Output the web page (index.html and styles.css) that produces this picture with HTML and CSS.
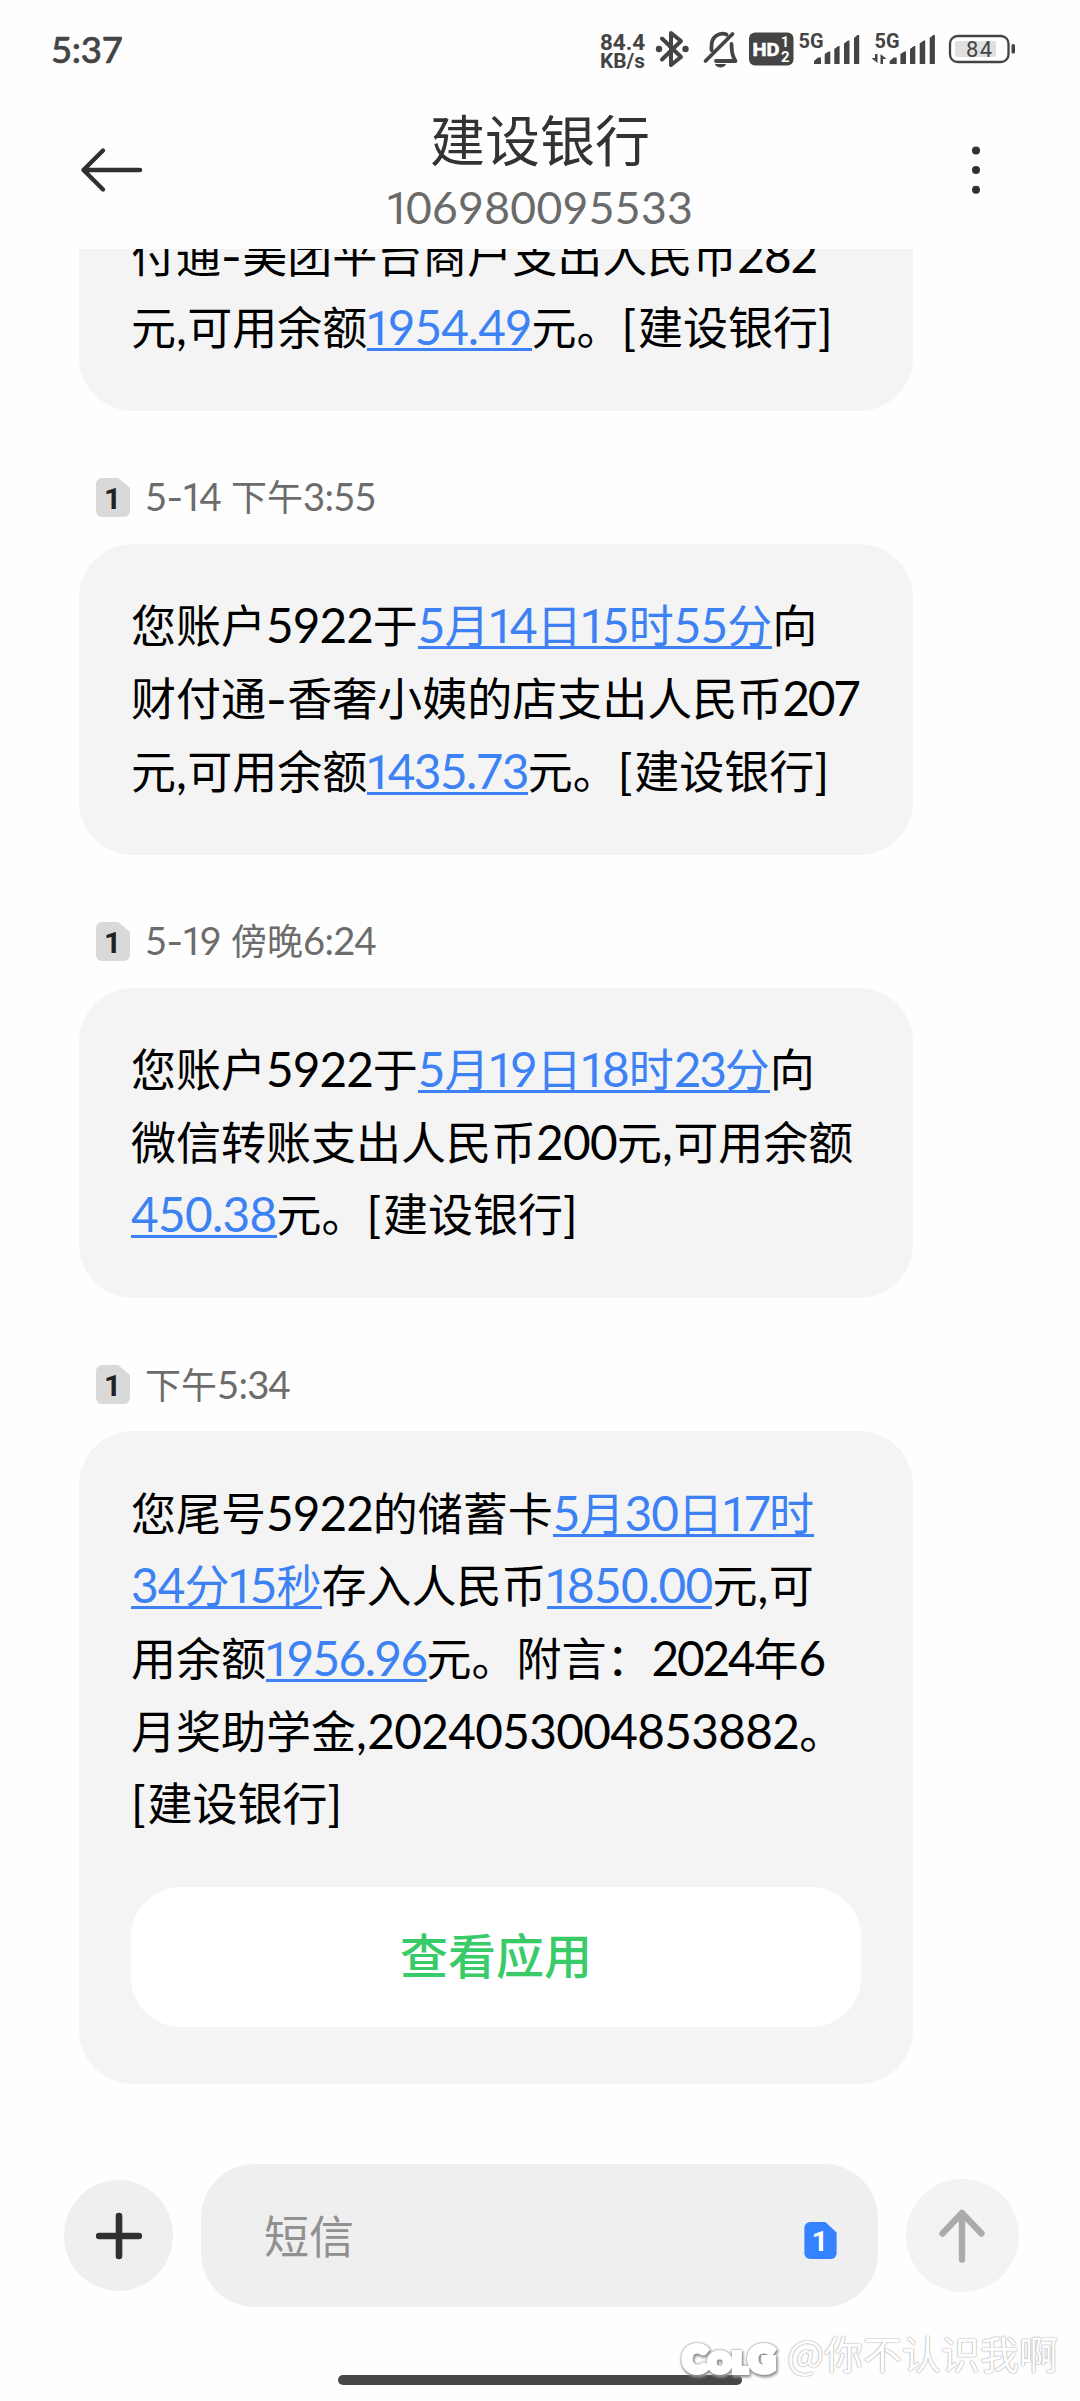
FILE: index.html
```html
<!DOCTYPE html>
<html lang="zh-CN">
<head>
<meta charset="utf-8">
<title>建设银行</title>
<link rel="stylesheet" href="styles.css">
</head>
<body>
<div class="screen">
  <header class="top">
    <div class="status">
      <span class="clock">5:37</span>
      <svg class="tray" width="424" height="44" viewBox="596 27 424 44">
        <g class="ink">
          <text class="bold" x="600" y="50" font-size="22" textLength="45" lengthAdjust="spacingAndGlyphs">84.4</text>
          <text class="bold" x="600" y="68" font-size="19.5" textLength="45" lengthAdjust="spacingAndGlyphs">KB/s</text>
          <path class="line" stroke-width="4" d="M662 38.5 681 57 671 65V33L681 41 662 59.5"/>
          <circle cx="659" cy="49" r="3.2"/><circle cx="685.5" cy="49" r="3.2"/>
          <path class="line" stroke-width="3.8" d="M705.5 61 732.5 34M711.500 50V46a11 12 0 0 1 15-11.500M731.500 44c.3 9 1 12 4 17H716"/>
          <path d="M715 64h11c-1 4.500-10 4.500-11 0z"/>
          <rect x="749" y="32.500" width="44.500" height="33" rx="6"/>
          <text class="bold white hd" x="752.500" y="56" font-size="18.500" textLength="27" lengthAdjust="spacingAndGlyphs">HD</text>
          <text class="bold white" x="781" y="47" font-size="14">1</text>
          <text class="bold white" x="781" y="62" font-size="15">2</text>
          <text class="bold" x="798.500" y="48" font-size="20" textLength="25" lengthAdjust="spacingAndGlyphs">5G</text>
          <path d="M814 64V61l4-3.500h3V64zM824.700 64V54l4-2.500h1.600V64zM834.300 64V49l4-3h1.300V64zM844 64V43.500l4-3h1.500V64zM854 64V38l3.500-3h1.700V64z"/>
          <text class="bold" x="874.500" y="48" font-size="20" textLength="25" lengthAdjust="spacingAndGlyphs">5G</text>
          <path d="M889.700 64V61l4-3.500h3V64zM900.400 64V54l4-2.500h1.600V64zM910 64V49l4-3h1.300V64zM919.700 64V43.500l4-3h1.500V64zM929.700 64V38l3.500-3h1.700V64z"/>
          <path d="M875 54h2.500v9L871.500 58H875zM880.500 54l6 5H883v5h-2.500z"/>
          <rect class="line" x="950" y="36" width="58.500" height="26" rx="7.500" stroke-width="2.300"/>
          <rect class="charge" x="955" y="41" width="41" height="16" rx="2"/>
          <text x="966" y="57" font-size="22" textLength="26">84</text>
          <rect x="1011.500" y="44" width="3.500" height="9.500" rx="1.500"/>
        </g>
      </svg>
    </div>
    <div class="title-bar">
      <svg class="back" width="68" height="50" viewBox="78 145 68 50"><path class="line dark" stroke-width="4.400" d="M103 150.500 83.500 170 103 189.500M83.500 170H140"/></svg>
      <div class="contact">
        <h1>建设银行</h1>
        <p><b>1</b>06980095533</p>
      </div>
      <svg class="more" width="20" height="50" viewBox="0 0 20 50"><circle cx="10" cy="5.500" r="4"/><circle cx="10" cy="25" r="4"/><circle cx="10" cy="44.700" r="4"/></svg>
    </div>
  </header>

  <main class="thread">
    <article class="message clipped">
      <div class="bubble">
        <p>付通<i class="dash">-</i>美团平台商户支出人民币<i>282</i></p>
        <p>元<i class="comma">,</i>可用余额<a><i><b>1</b>954.49</i></a>元。<i class="br">[</i>建设银行<i class="br">]</i></p>
      </div>
    </article>
    <article class="message">
      <div class="meta"><svg class="sim" viewBox="0 0 34 39"><path d="M6 0H22L34 10V33a6 6 0 0 1-6 6H6a6 6 0 0 1-6-6V6a6 6 0 0 1 6-6z"/><text x="16.500" y="30.500" text-anchor="middle">1</text></svg><span><i>5</i><i class="dash">-</i><i><b>1</b>4</i> 下午<i>3:55</i></span></div>
      <div class="bubble">
        <p>您账户<i>5922</i>于<a><i>5</i>月<i><b>1</b>4</i>日<i><b>1</b>5</i>时<i>55</i>分</a>向</p>
        <p>财付通<i class="dash">-</i>香奢小姨的店支出人民币<i class="tight">207</i></p>
        <p>元<i class="comma">,</i>可用余额<a><i class="snug"><b>1</b>435.73</i></a>元。<i class="br">[</i>建设银行<i class="br">]</i></p>
      </div>
    </article>
    <article class="message">
      <div class="meta"><svg class="sim" viewBox="0 0 34 39"><path d="M6 0H22L34 10V33a6 6 0 0 1-6 6H6a6 6 0 0 1-6-6V6a6 6 0 0 1 6-6z"/><text x="16.500" y="30.500" text-anchor="middle">1</text></svg><span><i>5</i><i class="dash">-</i><i><b>1</b>9</i> 傍晚<i>6:24</i></span></div>
      <div class="bubble">
        <p>您账户<i>5922</i>于<a><i>5</i>月<i><b>1</b>9</i>日<i><b>1</b>8</i>时<i class="tight">23</i>分</a>向</p>
        <p>微信转账支出人民币<i class="loose">200</i>元<i class="comma">,</i>可用余额</p>
        <p><a><i class="loose">450.38</i></a>元。<i class="br">[</i>建设银行<i class="br">]</i></p>
      </div>
    </article>
    <article class="message">
      <div class="meta"><svg class="sim" viewBox="0 0 34 39"><path d="M6 0H22L34 10V33a6 6 0 0 1-6 6H6a6 6 0 0 1-6-6V6a6 6 0 0 1 6-6z"/><text x="16.500" y="30.500" text-anchor="middle">1</text></svg><span>下午<i>5:34</i></span></div>
      <div class="bubble">
        <p>您尾号<i>5922</i>的储蓄卡<a><i>5</i>月<i>30</i>日<i class="tight"><b>1</b>7</i>时</a></p>
        <p><a><i>34</i>分<i><b>1</b>5</i>秒</a>存入人民币<a><i class="loose"><b>1</b>850.00</i></a>元<i class="comma">,</i>可</p>
        <p>用余额<a><i class="snug"><b>1</b>956.96</i></a>元。附言：<i class="tight">2024</i>年<i>6</i></p>
        <p>月奖助学金<i class="comma">,</i><i class="loose">2024053004853882</i>。</p>
        <p><i class="br">[</i>建设银行<i class="br">]</i></p>
        <div class="action">查看应用</div>
      </div>
    </article>
  </main>

  <footer class="composer">
    <div class="round add"><svg width="50" height="50" viewBox="0 0 50 50"><path class="line dark" stroke-width="6.600" d="M25 5V45M5.200 25H44.800"/></svg></div>
    <div class="field">
      <span>短信</span>
      <svg class="sim blue" viewBox="0 0 34 39"><path d="M6 0H22L34 11V33a6 6 0 0 1-6 6H6a6 6 0 0 1-6-6V6a6 6 0 0 1 6-6z"/><text x="16.500" y="31" text-anchor="middle">1</text></svg>
    </div>
    <div class="round send"><svg width="56" height="60" viewBox="0 0 56 60"><path class="line" stroke-width="6.400" d="M28 7V53.500M8.500 27.500 28 7 47.500 27.500"/></svg></div>
  </footer>
  <div class="home-bar"></div>
  <div class="watermark"><strong>C<small>OL</small>G</strong><span>@你不认识我啊</span></div>
</div>
</body>
</html>
```
FILE: styles.css
```css
* { box-sizing: border-box; margin: 0; padding: 0; }
body { background: #fefefe; font-family: "Noto Sans CJK SC", sans-serif; }
i { font-family: Lato, "Noto Sans CJK SC", sans-serif; font-style: normal; font-size: 1.06em; letter-spacing: -0.02em; line-height: 1; }
b { font-family: Roboto, sans-serif; font-weight: 400; margin-left: -0.045em; letter-spacing: -0.09em; }
.tight { letter-spacing: -0.045em; }
.snug { letter-spacing: -0.033em; }
.loose { letter-spacing: -0.014em; }
.dash { font-family: Inter, sans-serif; font-size: 1em; letter-spacing: 0.01em; }
.comma { letter-spacing: 0.01em; }
.br { letter-spacing: 0.04em; }

.screen { position: relative; width: 1080px; height: 2401px; overflow: hidden; display: flex; flex-direction: column; }
.top { height: 249px; flex: none; display: flex; flex-direction: column; position: relative; z-index: 1; background: #fefefe; }
.status { display: flex; justify-content: space-between; align-items: center; padding: 27px 60px 0 51px; height: 71px; }
.clock { font: 500 36.500px/44px Lato, sans-serif; color: #444; letter-spacing: -0.3px; -webkit-text-stroke: 0.6px #444; }
.tray { font-family: Roboto, sans-serif; }
.ink { fill: #444; }
.ink .line { stroke: #444; }
.line { fill: none; stroke-linecap: round; stroke-linejoin: round; }
.dark { stroke: #303030; }
.bold { font-weight: 700; }
.ink .white { fill: #fff; }
.ink .hd { stroke: #fff; stroke-width: 0.6px; }
.ink .charge { fill: #e0e0e0; }

.title-bar { display: grid; grid-template-columns: 1fr auto 1fr; align-items: start; padding: 0 94px; height: 178px; }
.back, .more { margin-top: 74px; }
.back { margin-left: -16px; }
.more { fill: #303030; justify-self: end; }
.contact { text-align: center; }
.contact h1 { font-size: 55px; font-weight: 400; line-height: 70px; margin-top: 31px; color: #333; }
.contact p { font: 44.500px/50px Lato, sans-serif; color: #6a6a6a; margin-top: 10px; letter-spacing: 0.3px; }

.thread { flex: none; height: 1835px; padding-left: 79px; display: flex; flex-direction: column; justify-content: flex-end; }
.message { width: 834px; }
.meta { height: 133px; display: flex; align-items: center; gap: 15px; padding: 40px 0 0 17px; font-size: 36px; line-height: 40px; color: #6c6c6c; white-space: pre; }
.meta span { word-spacing: 2px; padding-bottom: 2px; }
.sim { width: 34px; height: 39px; flex: none; fill: #d9d9d9; }
.sim text { font: 700 30px Roboto, sans-serif; fill: #222; }
.sim.blue { width: 33px; height: 37px; fill: #3482ff; }
.blue text { fill: #fff; }
.bubble { background: #f4f4f4; border-radius: 54px; padding: 44.500px 52px 48px; }
.bubble p { font-size: 45px; line-height: 72.700px; height: 72.700px; white-space: nowrap; color: #000; }
.bubble a { color: #3c82f5; background: linear-gradient(#3c82f5, #3c82f5) 0 calc(100% - 7px) / 100% 3px no-repeat; }
.action { margin: 47.500px 0 9.500px; height: 140px; border-radius: 50px; background: #fff; color: #3acb69; font-size: 48px; font-weight: 500; line-height: 133px; text-align: center; }

.composer { display: flex; align-items: center; height: 143px; margin-top: 80px; padding-left: 64px; flex: none; }
.round { border-radius: 50%; display: flex; align-items: center; justify-content: center; }
.add { width: 109px; height: 111px; background: #efefef; margin-right: 28px; }
.field { width: 677px; height: 143px; border-radius: 54px; background: #efefef; display: flex; align-items: center; justify-content: space-between; padding: 0 41px 3px 63px; font-size: 45px; color: #919191; margin-right: 27.500px; }
.field .sim { margin-top: 13px; }
.send { width: 113px; height: 113px; background: #f3f3f3; stroke: #ababab; }
.home-bar { width: 404px; height: 10px; border-radius: 5px; background: #474747; margin: 68px 0 0 338px; flex: none; }
.watermark { position: absolute; left: 679px; top: 2325px; display: flex; align-items: center; height: 54px; color: #fff; white-space: nowrap; }
.watermark strong { font: 900 36px/50px Lato, sans-serif; width: 108px; letter-spacing: 2px; margin-top: 16px; padding-left: 4px; -webkit-text-stroke: 6px #fff; paint-order: stroke fill; filter: drop-shadow(0 0 1px #777) drop-shadow(1px 2px 1px #999); }
.watermark small { font-size: 27px; letter-spacing: 2px; }
.watermark span { font-size: 39px; line-height: 54px; text-shadow: 0 0 1px #aaa, 0 0 2px #bbb, 0 0 1px #bbb; }
```
